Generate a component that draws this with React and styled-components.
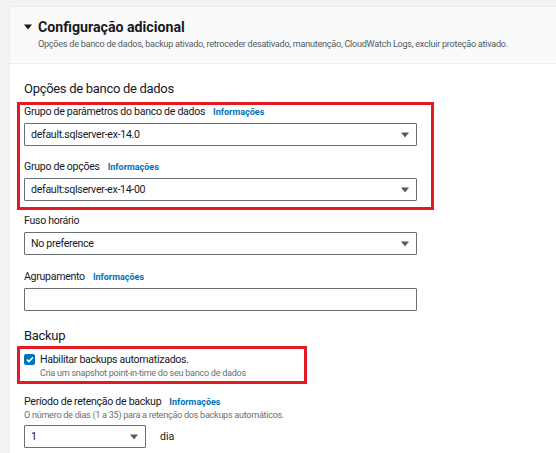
import React from 'react';
import styled, { createGlobalStyle } from 'styled-components';

const Global = createGlobalStyle`
  body {
    margin: 0;
    background: #f2f3f3;
    font-family: Roboto, "Liberation Sans", Arial, sans-serif;
    color: #16191f;
  }
`;

const Page = styled.div`
  padding: 6px 0 0 9px;
  height: 447px;
  overflow: hidden;
`;

const Card = styled.section`
  background: #fff;
  border: 1px solid #eaeded;
  border-right: none;
  min-height: 460px;
`;

const Header = styled.header`
  background: #fafafa;
  border-bottom: 1px solid #eaeded;
  padding: 10px 0 13px 14px;
`;

const TitleRow = styled.div`
  display: flex;
  align-items: center;
  gap: 6px;
  height: 20px;
  svg {
    width: 8px;
    height: 6px;
  }
`;

const Title = styled.h2`
  margin: 0;
  font-size: 14.2px;
  font-weight: 700;
`;

const Subtitle = styled.p`
  margin: 1px 0 0 14px;
  font-size: 9.1px;
  line-height: 12px;
  letter-spacing: -0.26px;
  color: #545b64;
`;

const Body = styled.div`
  padding: 1px 0 0 14px;
`;

const SectionTitle = styled.h3`
  margin: ${p => p.$top}px 0 0;
  font-size: 13px;
  font-weight: 400;
  line-height: 20px;
  letter-spacing: -0.3px;
`;

const Highlight = styled.div`
  border: 3px solid #e41b23;
  width: ${p => p.$width}px;
  margin: ${p => p.$top}px 0 0 -7px;
  padding: 0 0 ${p => p.$bottom}px 4px;
  box-sizing: border-box;
`;

const Field = styled.div`
  margin-top: ${p => p.$top}px;
`;

const Label = styled.div`
  display: flex;
  align-items: baseline;
  gap: 8px;
  font-size: 10.6px;
  line-height: 14px;
  letter-spacing: -0.3px;
`;

const Info = styled.span`
  color: #0073bb;
  font-weight: 700;
  font-size: 9px;
  letter-spacing: 0;
`;

const Hint = styled.div`
  font-size: 9.1px;
  line-height: 12px;
  letter-spacing: -0.28px;
  color: #687078;
`;

const Row = styled.div`
  display: flex;
  align-items: center;
  gap: 14px;
  margin-top: 4px;
`;

const Select = styled.div`
  box-sizing: border-box;
  width: ${p => p.$width}px;
  height: 23px;
  border: 1px solid #687078;
  border-radius: 1px;
  display: flex;
  align-items: center;
  justify-content: space-between;
  padding: 0 7px 0 6px;
  font-size: 10.6px;
  letter-spacing: -0.3px;
  margin-top: ${p => p.$top ?? 4}px;
  svg {
    width: 8px;
    height: 6px;
  }
`;

const Unit = styled.span`
  font-size: 10.6px;
`;

const CheckRow = styled.label`
  display: flex;
  gap: 5px;
  padding-top: 3px;
`;

const Box = styled.span`
  width: 11px;
  height: 11px;
  border-radius: 2px;
  background: #0073bb;
  display: flex;
  align-items: center;
  justify-content: center;
  margin-top: 2px;
  flex: none;
`;

const CheckText = styled.div`
  font-size: 10.6px;
  line-height: 15px;
  letter-spacing: -0.3px;
`;

const Caret = ({ color = '#545b64' }) => (
  <svg viewBox="0 0 8 6">
    <path d="M0 0.5h8L4 5.5z" fill={color} />
  </svg>
);

const Dropdown = ({ value, width = 393, top }) => (
  <Select $width={width} $top={top}>
    <span>{value}</span>
    <Caret />
  </Select>
);

export default function App() {
  return (
    <>
      <Global />
      <Page>
        <Card>
          <Header>
            <TitleRow>
              <Caret color="#16191f" />
              <Title>Configuração adicional</Title>
            </TitleRow>
            <Subtitle>
              Opções de banco de dados, backup ativado, retroceder desativado, manutenção, CloudWatch Logs, excluir proteção ativado.
            </Subtitle>
          </Header>
          <Body>
            <SectionTitle $top={14}>Opções de banco de dados</SectionTitle>
            <Highlight $width={417} $top={3} $bottom={6}>
              <Label>Grupo de parâmetros do banco de dados <Info>Informações</Info></Label>
              <Dropdown value="default.sqlserver-ex-14.0" />
              <Field $top={14}>
                <Label>Grupo de opções <Info>Informações</Info></Label>
                <Dropdown value="default:sqlserver-ex-14-00" />
              </Field>
            </Highlight>
            <Field $top={4}>
              <Label>Fuso horário</Label>
              <Dropdown value="No preference" />
            </Field>
            <Field $top={15}>
              <Label>Agrupamento <Info>Informações</Info></Label>
              <Select $width={393} />
            </Field>
            <SectionTitle $top={15}>Backup</SectionTitle>
            <Highlight $width={290} $top={0} $bottom={2}>
              <CheckRow>
                <Box>
                  <svg width="8" height="7" viewBox="0 0 8 7">
                    <path d="M1 3.6l2 2L7 1.2" stroke="#fff" strokeWidth="1.5" fill="none" />
                  </svg>
                </Box>
                <div>
                  <CheckText>Habilitar backups automatizados.</CheckText>
                  <Hint>Cria um snapshot point-in-time do seu banco de dados</Hint>
                </div>
              </CheckRow>
            </Highlight>
            <Field $top={11}>
              <Label>Período de retenção de backup <Info>Informações</Info></Label>
              <Hint>O número de dias (1 a 35) para a retenção dos backups automáticos.</Hint>
              <Row>
                <Dropdown value="1" width={122} top={0} />
                <Unit>dia</Unit>
              </Row>
            </Field>
          </Body>
        </Card>
      </Page>
    </>
  );
}
